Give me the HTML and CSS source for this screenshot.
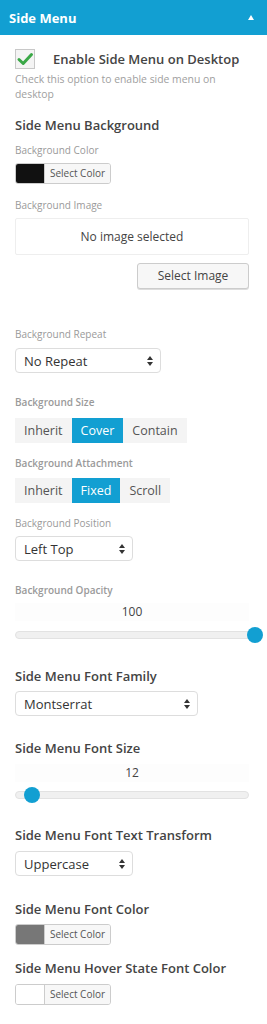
FILE: index.html
```html
<!DOCTYPE html>
<html lang="en">
<head>
    <meta charset="UTF-8">
    <meta name="viewport" content="width=device-width, initial-scale=1.0">
    <title>Side Menu</title>
    <link rel="stylesheet" href="styles.css">
</head>
<body>
    <div class="panel-header">
        <span>Side Menu</span>
        <span class="collapse-arrow"></span>
    </div>

    <div class="panel">
        <div class="checkbox-field">
            <div class="checkbox-row">
                <span class="checkbox">
                    <svg width="18" height="18" viewBox="0 0 18 18"><path d="M3 9.5 L7.2 13.5 L15.5 4.5" fill="none" stroke="#3aa847" stroke-width="3" stroke-linecap="round" stroke-linejoin="round"/></svg>
                </span>
                <span class="checkbox-label">Enable Side Menu on Desktop</span>
            </div>
            <p class="description">Check this option to enable side menu on desktop</p>
        </div>

        <h3 class="heading first-heading">Side Menu Background</h3>

        <div class="field f-color">
            <div class="label">Background Color</div>
            <div class="color-picker">
                <span class="swatch swatch-dark"></span>
                <span class="picker-btn">Select Color</span>
            </div>
        </div>

        <div class="field f-image">
            <div class="label">Background Image</div>
            <div class="image-box">No image selected</div>
            <div class="image-actions">
                <span class="button">Select Image</span>
            </div>
        </div>

        <div class="field f-repeat">
            <div class="label">Background Repeat</div>
            <div class="select select-md">
                <span>No Repeat</span>
                <span class="arrows"></span>
            </div>
        </div>

        <div class="field f-size">
            <div class="label strong">Background Size</div>
            <div class="button-set">
                <span>Inherit</span>
                <span class="active">Cover</span>
                <span>Contain</span>
            </div>
        </div>

        <div class="field f-attach">
            <div class="label strong">Background Attachment</div>
            <div class="button-set">
                <span>Inherit</span>
                <span class="active">Fixed</span>
                <span>Scroll</span>
            </div>
        </div>

        <div class="field f-position">
            <div class="label">Background Position</div>
            <div class="select select-sm">
                <span>Left Top</span>
                <span class="arrows"></span>
            </div>
        </div>

        <div class="field f-opacity">
            <div class="label strong">Background Opacity</div>
            <div class="slider-value">100</div>
            <div class="slider slider-wide">
                <span class="thumb" style="left: 100%"></span>
            </div>
        </div>

        <div class="field f-family">
            <h3 class="heading">Side Menu Font Family</h3>
            <div class="select select-lg">
                <span>Montserrat</span>
                <span class="arrows"></span>
            </div>
        </div>

        <div class="field f-fontsize">
            <h3 class="heading">Side Menu Font Size</h3>
            <div class="slider-value">12</div>
            <div class="slider">
                <span class="thumb" style="left: 7%"></span>
            </div>
        </div>

        <div class="field f-transform">
            <h3 class="heading">Side Menu Font Text Transform</h3>
            <div class="select select-sm">
                <span>Uppercase</span>
                <span class="arrows"></span>
            </div>
        </div>

        <div class="field f-fontcolor">
            <h3 class="heading">Side Menu Font Color</h3>
            <div class="color-picker">
                <span class="swatch swatch-grey"></span>
                <span class="picker-btn">Select Color</span>
            </div>
        </div>

        <div class="field f-hover">
            <h3 class="heading">Side Menu Hover State Font Color</h3>
            <div class="color-picker">
                <span class="swatch swatch-white"></span>
                <span class="picker-btn">Select Color</span>
            </div>
        </div>
    </div>
</body>
</html>
```

FILE: styles.css
```css
body {
    margin: 0;
    background-color: #fff;
    font-family: "Open Sans", Arial, sans-serif;
    color: #444;
}

.panel-header {
    height: 35px;
    background-color: #129fd2;
    color: #fff;
    font-size: 13px;
    font-weight: 700;
    display: flex;
    align-items: center;
    justify-content: space-between;
    padding: 0 13px 0 9px;
}

.collapse-arrow {
    width: 0;
    height: 0;
    border-left: 3px solid transparent;
    border-right: 3px solid transparent;
    border-bottom: 5px solid #fff;
}

.panel {
    padding: 14px 18px 20px 15px;
}

/* checkbox */
.checkbox-row {
    display: flex;
    align-items: center;
    height: 20px;
}

.checkbox {
    width: 20px;
    height: 20px;
    box-sizing: border-box;
    border: 1px solid #c8c8c8;
    background-color: #f4f4f4;
    display: flex;
    align-items: center;
    justify-content: center;
}

.checkbox-label {
    margin-left: 18px;
    font-size: 13px;
    font-weight: 600;
    color: #444;
}

.description {
    margin: 3px 0 0 0;
    font-size: 10.4px;
    line-height: 15px;
    color: #a0a0a0;
}

.heading {
    margin: 0;
    font-size: 13px;
    font-weight: 600;
    line-height: 18px;
    color: #444;
}

.first-heading {
    margin-top: 14px;
}

.label {
    font-size: 10px;
    line-height: 14px;
    color: #9a9a9a;
}

.label.strong {
    font-weight: 600;
}

/* field spacing */
.f-color { margin-top: 9px; }
.f-image { margin-top: 14px; }
.f-repeat { margin-top: 38px; }
.f-size { margin-top: 22px; }
.f-attach { margin-top: 13px; }
.f-position { margin-top: 13px; }
.f-opacity { margin-top: 22px; }
.f-family { margin-top: 28px; }
.f-fontsize { margin-top: 23px; }
.f-transform { margin-top: 27px; }
.f-fontcolor { margin-top: 24px; }
.f-hover { margin-top: 14px; }

.field .color-picker,
.field .image-box,
.field .select {
    margin-top: 6px;
}

.f-repeat .select { margin-top: 7px; }
.f-transform .select { margin-top: 7px; }
.f-hover .color-picker { margin-top: 7px; }
.f-size .button-set { margin-top: 9px; }
.f-attach .button-set { margin-top: 8px; }

/* color picker */
.color-picker {
    display: flex;
    width: 96px;
    height: 21px;
    box-sizing: border-box;
    border: 1px solid #ccc;
    border-radius: 3px;
    overflow: hidden;
}

.swatch {
    width: 28px;
    border-right: 1px solid #ccc;
}

.swatch-dark { background-color: #111; }
.swatch-grey { background-color: #777; }
.swatch-white { background-color: #fff; }

.picker-btn {
    flex: 1;
    background-color: #f7f7f7;
    font-size: 10px;
    line-height: 19px;
    text-align: center;
    color: #555;
}

/* image upload */
.image-box {
    height: 37px;
    box-sizing: border-box;
    border: 1px solid #eee;
    border-radius: 2px;
    display: flex;
    align-items: center;
    justify-content: center;
    font-size: 12px;
    color: #444;
}

.image-actions {
    margin-top: 8px;
    display: flex;
    justify-content: flex-end;
}

.button {
    width: 112px;
    height: 26px;
    box-sizing: border-box;
    border: 1px solid #ccc;
    border-radius: 3px;
    background-color: #f7f7f7;
    box-shadow: 0 1px 0 #ddd;
    font-size: 12px;
    line-height: 24px;
    text-align: center;
    color: #444;
}

/* select */
.select {
    height: 25px;
    box-sizing: border-box;
    border: 1px solid #ddd;
    border-radius: 4px;
    padding: 0 7px 0 8px;
    display: flex;
    align-items: center;
    justify-content: space-between;
    font-size: 13px;
    color: #333;
}

.select-sm { width: 118px; }
.select-md { width: 146px; }
.select-lg { width: 183px; }

.arrows {
    position: relative;
    width: 6px;
    height: 10px;
}

.arrows::before,
.arrows::after {
    content: "";
    position: absolute;
    left: 0;
    border-left: 3px solid transparent;
    border-right: 3px solid transparent;
}

.arrows::before {
    top: 0;
    border-bottom: 4px solid #333;
}

.arrows::after {
    bottom: 0;
    border-top: 4px solid #333;
}

/* button set */
.button-set {
    display: inline-flex;
    height: 25px;
    background-color: #f4f4f4;
}

.button-set span {
    padding: 0 9px;
    font-size: 12.5px;
    line-height: 25px;
    color: #555;
}

.button-set span.active {
    background-color: #129fd2;
    color: #fff;
}

/* slider */
.slider-value {
    margin-top: 6px;
    height: 18px;
    line-height: 18px;
    background-color: #fdfdfd;
    font-size: 12px;
    text-align: center;
    color: #444;
}

.f-fontsize .slider-value {
    margin-top: 7px;
}

.slider {
    position: relative;
    margin-top: 10px;
    height: 8px;
    box-sizing: border-box;
    border: 1px solid #e2e2e2;
    border-radius: 4px;
    background-color: #f0f0f0;
}

.f-fontsize .slider {
    margin-top: 9px;
}

.slider-wide {
    margin-right: -7px;
}

.thumb {
    position: absolute;
    top: 50%;
    width: 16px;
    height: 16px;
    margin: -8px 0 0 -8px;
    border-radius: 50%;
    background-color: #129fd2;
}
```
